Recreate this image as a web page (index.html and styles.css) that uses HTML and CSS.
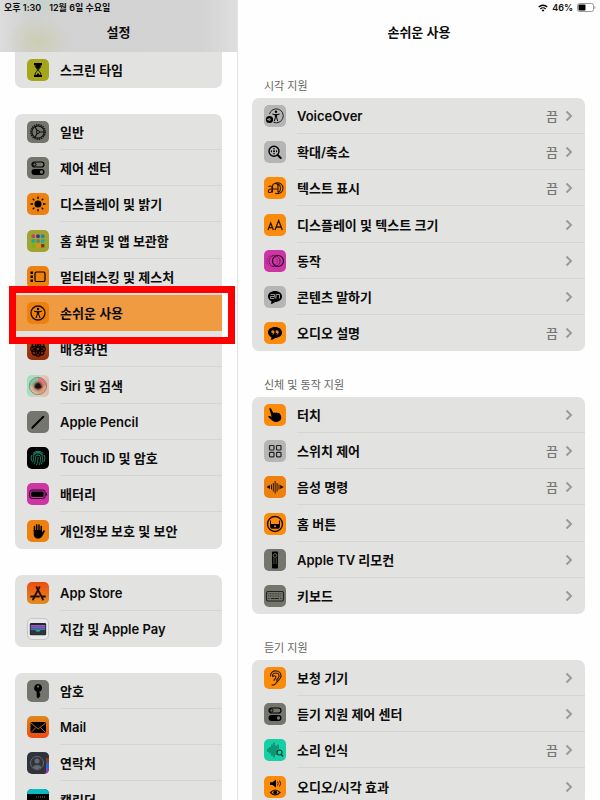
FILE: index.html
```html
<!DOCTYPE html>
<html lang="ko">
<head>
<meta charset="utf-8">
<meta name="viewport" content="width=device-width, initial-scale=1">
<title>설정</title>
<link rel="stylesheet" href="styles.css">
</head>
<body>
<div class="app">
  <nav class="sidebar" aria-label="설정">
    <header class="bar bar-side">
      <div class="status"><span>오후 1:30</span><span>12월 6일 수요일</span></div>
      <h1 class="title">설정</h1>
    </header>
    <div class="groups">
      <ul class="card card-cut">
        <li><a class="row" href="#"><svg class="icon olive" viewBox="0 0 22 22"><path d="M7 4h8v2H7zM7 16h8v2H7z"/><path d="M8 5c0 4 2 4 2.500 6C10 13 8 13 8 17h6c0-4-2-4-2.500-6C12 9 14 9 14 5z" fill="none" stroke="#000"/><path d="M8.500 6h5c0 2-1 3-2.500 4.500C9.500 9 8.500 8 8.500 6zM8.500 17l2.500-3 2.500 3z"/></svg><span class="label">스크린 타임</span></a></li>
      </ul>
      <ul class="card">
        <li><a class="row" href="#"><svg class="icon stone" viewBox="0 0 22 22"><circle cx="11" cy="11" r="7.300" fill="none" stroke="#111" stroke-width="1.400" stroke-dasharray="1.300 1"/><circle cx="11" cy="11" r="6.200" fill="none" stroke="#111" stroke-width="1.300"/><circle cx="11" cy="11" r="1.500" fill="none" stroke="#111"/><path d="M12.500 11H17M10.200 9.700 8 5.700M10.200 12.300 8 16.300" stroke="#111" stroke-width="1.200"/></svg><span class="label">일반</span></a></li>
        <li><a class="row" href="#"><svg class="icon stone" viewBox="0 0 22 22"><rect x="5" y="5" width="12" height="5" rx="2.500" fill="none" stroke="#000" stroke-width="1.200"/><circle cx="7.500" cy="7.500" r="1.500" fill="none" stroke="#000"/><rect x="4.500" y="12" width="13" height="6" rx="3"/><circle cx="14.500" cy="15" r="1.700" fill="#777870"/></svg><span class="label">제어 센터</span></a></li>
        <li><a class="row" href="#"><svg class="icon orange" viewBox="0 0 22 22"><circle cx="11" cy="11" r="3.500"/><path d="M11 3.500v2.500M11 16v2.500M3.500 11H6M16 11h2.500M5.700 5.700l1.700 1.700M14.600 14.600l1.700 1.700M5.700 16.300l1.700-1.700M14.600 7.400l1.700-1.700" stroke="#000" stroke-width="1.300"/></svg><span class="label">디스플레이 및 밝기</span></a></li>
        <li><a class="row" href="#"><svg class="icon moss" viewBox="0 0 22 22"><g><rect x="4.500" y="4.500" width="3.500" height="3.500" rx="1" fill="#c63e78"/><rect x="9.300" y="4.500" width="3.500" height="3.500" rx="1" fill="#2d399c"/><rect x="14" y="4.500" width="3.500" height="3.500" rx="1" fill="#2a79b8"/><rect x="4.500" y="9.300" width="3.500" height="3.500" rx="1" fill="#0eb194"/><rect x="9.300" y="9.300" width="3.500" height="3.500" rx="1" fill="#777870"/><rect x="14" y="9.300" width="3.500" height="3.500" rx="1" fill="#08b3a2"/><rect x="4.500" y="14" width="3.500" height="3.500" rx="1" fill="#6eb615"/><rect x="9.300" y="14" width="3.500" height="3.500" rx="1" fill="#e88b13"/><rect x="14" y="14" width="3.500" height="3.500" rx="1" fill="#8c3218"/></g></svg><span class="label">홈 화면 및 앱 보관함</span></a></li>
        <li><a class="row" href="#"><svg class="icon orange" viewBox="0 0 22 22"><rect x="8" y="6" width="10" height="9.500" rx="1.500" fill="none" stroke="#000" stroke-width="1.200"/><path d="M3.500 5.500H6V8H3.500zM3.500 9.500H6V12H3.500zM3.500 13.500H6V16H3.500z"/></svg><span class="label">멀티태스킹 및 제스처</span></a></li>
        <li class="marked"><a class="row current" href="#" aria-current="page"><svg class="icon orange" viewBox="0 0 22 22"><circle cx="11" cy="11" r="7" fill="none" stroke="#1b0d00" stroke-width="1.300"/><circle cx="11" cy="7" r="1.200"/><path d="M7.500 9.300l2.500.5h2l2.500-.5M10.300 10v2.500L9 15.700M11.700 10v2.500l1.300 3.200M11 10v2.500" fill="none" stroke="#000" stroke-linecap="round"/></svg><span class="label">손쉬운 사용</span></a></li>
        <li><a class="row" href="#"><svg class="icon rust" viewBox="0 0 22 22"><g fill="none" stroke="#160300" stroke-width="1.300"><circle cx="11" cy="6.500" r="2.700"/><circle cx="11" cy="15.500" r="2.700"/><circle cx="6.500" cy="11" r="2.700"/><circle cx="15.500" cy="11" r="2.700"/><circle cx="7.800" cy="7.800" r="2.700"/><circle cx="14.200" cy="14.200" r="2.700"/><circle cx="7.800" cy="14.200" r="2.700"/><circle cx="14.200" cy="7.800" r="2.700"/><circle cx="11" cy="11" r="2"/></g></svg><span class="label">배경화면</span></a></li>
        <li><a class="row" href="#"><svg class="icon siri" viewBox="0 0 22 22"><defs><radialGradient id="orb"><stop offset="0"/><stop offset=".25" stop-color="#2a1716"/><stop offset=".6" stop-color="#c3826d" stop-opacity=".5"/><stop offset="1" stop-color="#d9b5a0" stop-opacity=".1"/></radialGradient></defs><path d="M11 11V2.500a8.500 8.500 0 0 1 8.500 8.500z" fill="#ea5560" opacity=".8"/><path d="M11 11h8.500a8.500 8.500 0 0 1-8.500 8.500z" fill="#e89a6a" opacity=".8"/><path d="M11 11v8.500A8.500 8.500 0 0 1 2.500 11z" fill="#e8b890" opacity=".8"/><path d="M11 11H2.500A8.500 8.500 0 0 1 11 2.500z" fill="#55cfa4" opacity=".8"/><circle cx="11" cy="11" r="8.700" fill="url(#orb)" stroke="#66756a" stroke-width=".7"/><path d="M7 12c2-.5 3-3 5-4 0 2 1 3 4 4-3 1-6 1.500-9 0z" fill="#161412"/></svg><span class="label">Siri 및 검색</span></a></li>
        <li><a class="row" href="#"><svg class="icon stone" viewBox="0 0 22 22"><path d="M5.500 16.500 14 8M15 7l1.300-1.300" stroke="#000" stroke-width="2" stroke-linecap="round"/><path d="M4.500 17.700l.7-2.500 1.700 1.700z"/></svg><span class="label">Apple Pencil</span></a></li>
        <li><a class="row" href="#"><svg class="icon black" viewBox="0 0 22 22"><g fill="none" stroke="#218f73" stroke-width=".9" stroke-linecap="round"><path d="M6 6.200a7 7 0 0 1 10 0M4.500 8.500a7 7 0 0 0 0 5M17.500 8.500a7 7 0 0 1-.5 6M5.500 15c1-1.500 1-3 1-4.500a4.500 4.500 0 0 1 9 0c0 2.500 0 4-1 6.500M7 17c1.300-2 1.500-4 1.500-6.500a2.500 2.500 0 0 1 5 0c0 3-.2 5-1.300 7.300M9.500 18c1-2 1.500-4.500 1.500-7.500M6 8.300c2-4 8-4 10 0"/></g></svg><span class="label">Touch ID 및 암호</span></a></li>
        <li><a class="row" href="#"><svg class="icon magenta" viewBox="0 0 22 22"><rect x="2.700" y="7" width="15.500" height="8.500" rx="2.500" fill="none" stroke="#24051d"/><rect x="4.200" y="8.500" width="12.500" height="5.500" rx="1.300"/><path d="M19 9.500c1.500.5 1.500 3 0 3.500z"/></svg><span class="label">배터리</span></a></li>
        <li><a class="row" href="#"><svg class="icon orange" viewBox="0 0 22 22"><path d="M7.500 11V6.500M9.700 10V4.700M12 10V5M14.200 11V6.500M15 14l2-3" stroke="#000" stroke-width="1.500" stroke-linecap="round"/><path d="M6.700 10H15v3l1.500-2c1-.7 1.500.2 1 1L15 16.500c-1 1.500-2 2-4 2-3.500 0-4.300-2.500-4.300-5z"/></svg><span class="label">개인정보 보호 및 보안</span></a></li>
      </ul>
      <ul class="card">
        <li><a class="row" href="#"><svg class="icon sunset" viewBox="0 0 22 22"><path d="M9.500 5l6.500 12.500M12.500 5 6 17.500M4 14.500h8M14.500 14.500H18" stroke="#210b00" stroke-width="1.800" stroke-linecap="round"/></svg><span class="label">App Store</span></a></li>
        <li><a class="row" href="#"><svg class="icon wallet" viewBox="0 0 22 22"><rect x="2" y="4.500" width="18" height="13.500" rx="1.500" fill="#222830"/><path d="M3 6.500h16v2H3z" fill="#8d61a9"/><path d="M3 8.500h16v2H3z" fill="#8a55d2"/><path d="M3 10.500h16v2H3z" fill="#397baa"/><path d="M3 12h4.500c1 0 1 2.500 3.500 2.500s2.500-2.500 3.500-2.500H19v5H3z" fill="#30343b"/><path d="M8 12h6c-.6 1-1 2-3 2s-2.400-1-3-2z" fill="#16a9a2"/></svg><span class="label">지갑 및 Apple Pay</span></a></li>
      </ul>
      <ul class="card">
        <li><a class="row" href="#"><svg class="icon stone" viewBox="0 0 22 22"><path fill-rule="evenodd" d="M11 4a4 4 0 0 1 1.500 7.700V13l1 1-1 1 1 1-1 1L11 18.500 9.700 17v-5.300A4 4 0 0 1 11 4zm0 1.500a1.100 1.100 0 1 0 0 2.200 1.100 1.100 0 0 0 0-2.200z"/></svg><span class="label">암호</span></a></li>
        <li><a class="row" href="#"><svg class="icon sunrise" viewBox="0 0 22 22"><rect x="3.500" y="6" width="15.500" height="11" rx="1.500"/><path d="M4 7l7.200 6L18.500 7M4 16.500l5-5M18.500 16.500l-5-5" fill="none" stroke="#d86a15" stroke-width=".9"/></svg><span class="label">Mail</span></a></li>
        <li><a class="row" href="#"><svg class="icon contacts" viewBox="0 0 22 22"><path d="M19 0h3v6h-3z" fill="#30333b"/><path d="M19 6h3v5h-3z" fill="#81421f"/><path d="M19 11h3v6h-3z" fill="#2865d4"/><path d="M19 17h3v5h-3z" fill="#a832ae"/><circle cx="10" cy="11" r="6.500" fill="none" stroke="#646973"/><circle cx="10" cy="9" r="2.500" fill="#646973"/><path d="M5.700 15.200c1-3 7.600-3 8.600 0-2.500 2.400-6 2.400-8.600 0z" fill="#646973"/></svg><span class="label">연락처</span></a></li>
        <li><a class="row" href="#"><svg class="icon black" viewBox="0 0 22 22"><path d="M0 0h22v5H0z" fill="#09bac1"/><path d="M9 8h10M4 12h15" stroke="#777" stroke-dasharray="1 1"/></svg><span class="label">캘린더</span></a></li>
      </ul>
    </div>
  </nav>

  <main class="detail">
    <header class="bar">
      <div class="status status-end">
        <svg class="wifi" viewBox="0 0 10 8"><path d="M.7 3a6.200 6.200 0 0 1 8.600 0M2.400 4.900a3.700 3.700 0 0 1 5.200 0" fill="none" stroke="#000" stroke-width="1.400"/><path d="M3.600 6.200a2 2 0 0 1 2.800 0L5 7.700z"/></svg>
        <span>46%</span>
        <svg class="battery" viewBox="0 0 19 9"><rect x=".5" y=".5" width="16" height="8" rx="2" fill="none" stroke="#999"/><rect x="1.500" y="1.500" width="7" height="6" rx="1"/><path d="M17.500 3c1.300.4 1.300 2.600 0 3z" fill="#999"/></svg>
      </div>
      <h2 class="title">손쉬운 사용</h2>
    </header>

    <section class="section">
      <h3 class="caption">시각 지원</h3>
      <ul class="card">
        <li><a class="row" href="#"><svg class="icon silver" viewBox="0 0 22 22"><path d="M5.500 9a7 7 0 1 1 4 8.300" fill="none" stroke="#222"/><circle cx="12" cy="6.800" r="1.200"/><path d="M8.800 9.200l2.200.5h2l2.200-.5M11.400 10v2.500l-1 3.300M12.600 10v2.500l1 3.300M12 10v2.500" fill="none" stroke="#000" stroke-linecap="round"/><circle cx="5.500" cy="14.500" r="3.600"/><path d="M3.500 14h1l1-1v3l-1-1h-1zM6.500 13.500v2" stroke="#999" stroke-width=".6" fill="#999"/></svg><span class="label">VoiceOver</span><span class="value">끔</span><svg class="chevron" viewBox="0 0 8 12"><path d="M1.500 1.500 6 6l-4.500 4.500"/></svg></a></li>
        <li><a class="row" href="#"><svg class="icon silver" viewBox="0 0 22 22"><circle cx="10" cy="10.300" r="5" fill="none" stroke="#000" stroke-width="1.400"/><path d="M13.700 14l3 3" stroke="#000" stroke-width="2" stroke-linecap="round"/><path d="M10 6.800l1.200 1.500H8.800zM10 13.800l1.200-1.500H8.800zM6.500 10.300l1.500-1.200v2.400zM13.500 10.300 12 9.100v2.400z"/><circle cx="10" cy="10.300" r="1"/></svg><span class="label">확대/축소</span><span class="value">끔</span><svg class="chevron" viewBox="0 0 8 12"><path d="M1.500 1.500 6 6l-4.500 4.500"/></svg></a></li>
        <li><a class="row" href="#"><svg class="icon amber" viewBox="0 0 22 22"><g fill="none" stroke="#2b1300" stroke-width="1.100"><path d="M11 6.200c5-1.500 8 1.500 8 5s-3 6.500-8 5"/><path d="M4.500 10c1-1.500 3.500-1.500 3.500.5v5M8 12c-4.500-.5-4.500 4-2 3.500 1.500 0 2-1.500 2-2.500M8 12h6M8.500 15.500V9.500c0-4 5.500-4 5.500 0v6M11.500 6.500c4 0 5 3 5 5s-1 3.500-2.500 4"/></g></svg><span class="label">텍스트 표시</span><span class="value">끔</span><svg class="chevron" viewBox="0 0 8 12"><path d="M1.500 1.500 6 6l-4.500 4.500"/></svg></a></li>
        <li><a class="row" href="#"><svg class="icon amber" viewBox="0 0 22 22"><path d="M4 16l2.700-7 2.700 7M5 13.700h3.500M11 16l3.700-9.500L18.300 16M12.300 13h4.700" fill="none" stroke="#291300" stroke-width="1.300"/></svg><span class="label">디스플레이 및 텍스트 크기</span><svg class="chevron" viewBox="0 0 8 12"><path d="M1.500 1.500 6 6l-4.500 4.500"/></svg></a></li>
        <li><a class="row" href="#"><svg class="icon magenta" viewBox="0 0 22 22"><g fill="none" stroke="#270620"><circle cx="14" cy="11" r="5.500" stroke-width="1.200"/><circle cx="10.500" cy="11" r="5.500" stroke-dasharray="1.500 .8" stroke-width=".8"/><circle cx="8" cy="11" r="5.300" stroke-dasharray=".7 1.200" stroke-width=".7"/></g></svg><span class="label">동작</span><svg class="chevron" viewBox="0 0 8 12"><path d="M1.500 1.500 6 6l-4.500 4.500"/></svg></a></li>
        <li><a class="row" href="#"><svg class="icon silver" viewBox="0 0 22 22"><path d="M11 5c4 0 7 2.300 7 5.500S15 16 11 16c-1.200 1.300-2.700 2-4.500 1.800.8-.7 1-1.500.9-2.500C5.500 14.300 4 12.700 4 10.500 4 7.300 7 5 11 5z"/><path d="M6.500 8.500h4v2h-4v2h3.500M12 12.500v-4h3.500v4M11 10.500v2" fill="none" stroke="#a5a5a5" stroke-width=".9"/></svg><span class="label">콘텐츠 말하기</span><svg class="chevron" viewBox="0 0 8 12"><path d="M1.500 1.500 6 6l-4.500 4.500"/></svg></a></li>
        <li><a class="row" href="#"><svg class="icon amber" viewBox="0 0 22 22"><path d="M11 5c4 0 7 2.300 7 5.500S15 16 11 16c-1.200 1.300-2.700 2-4.500 1.800.8-.7 1-1.500.9-2.500C5.500 14.300 4 12.700 4 10.500 4 7.300 7 5 11 5z"/><g fill="#e78612"><circle cx="8.800" cy="9.800" r="1.500"/><circle cx="13" cy="9.800" r="1.500"/><path d="M10.300 9.500c.3 2-.5 3-2 3.300.7-1 1-1.500 1-2.500zM14.500 9.500c.3 2-.5 3-2 3.300.7-1 1-1.500 1-2.500z"/></g></svg><span class="label">오디오 설명</span><span class="value">끔</span><svg class="chevron" viewBox="0 0 8 12"><path d="M1.500 1.500 6 6l-4.500 4.500"/></svg></a></li>
      </ul>
    </section>

    <section class="section">
      <h3 class="caption">신체 및 동작 지원</h3>
      <ul class="card">
        <li><a class="row" href="#"><svg class="icon amber" viewBox="0 0 22 22"><path d="M5.200 4.500c.8-.7 1.700-.3 2.100.5L9.300 9c.7-.7 1.700-.6 2.200 0 .8-.7 1.800-.5 2.200.2.900-.6 1.900-.2 2.200.6 1 1.500 1.600 3 1.400 4.500-.5 2.500-3 3.700-5.300 3.700-2 0-3.500-1-5-2.500l-2.500-2.200c-.7-.8.200-1.700 1.200-1.300l2 .8z"/></svg><span class="label">터치</span><svg class="chevron" viewBox="0 0 8 12"><path d="M1.500 1.500 6 6l-4.500 4.500"/></svg></a></li>
        <li><a class="row" href="#"><svg class="icon silver" viewBox="0 0 22 22"><g fill="none" stroke="#222" stroke-width="1.200"><rect x="5.500" y="5.500" width="4.500" height="4.500" rx=".8"/><rect x="12.500" y="5.500" width="4.500" height="4.500" rx=".8"/><rect x="5.500" y="12.300" width="4.500" height="4.500" rx=".8"/><rect x="12.500" y="12.300" width="4.500" height="4.500" rx=".8"/></g></svg><span class="label">스위치 제어</span><span class="value">끔</span><svg class="chevron" viewBox="0 0 8 12"><path d="M1.500 1.500 6 6l-4.500 4.500"/></svg></a></li>
        <li><a class="row" href="#"><svg class="icon orange" viewBox="0 0 22 22"><path d="M7.500 8.500v5M11.200 5v12.500M15 8.500v5M9.300 7v8.500M13.100 7v8.500" stroke="#291300" stroke-width="1"/><path d="M2.500 11 6 9v4zM19.700 11 16.200 9v4z"/></svg><span class="label">음성 명령</span><span class="value">끔</span><svg class="chevron" viewBox="0 0 8 12"><path d="M1.500 1.500 6 6l-4.500 4.500"/></svg></a></li>
        <li><a class="row" href="#"><svg class="icon amber" viewBox="0 0 22 22"><circle cx="11" cy="11" r="7.500" fill="none" stroke="#1d0d00" stroke-width="1.400"/><path d="M6.500 7.500v6q0 1.500 1.500 1.500h6q1.500 0 1.500-1.500v-6" fill="none" stroke="#1d0d00"/><path d="M6.500 11h9v3q0 1.500-1.500 1.500H8q-1.500 0-1.500-1.500z"/><circle cx="11" cy="13.200" r="1" fill="#ef8b12"/></svg><span class="label">홈 버튼</span><svg class="chevron" viewBox="0 0 8 12"><path d="M1.500 1.500 6 6l-4.500 4.500"/></svg></a></li>
        <li><a class="row" href="#"><svg class="icon stone" viewBox="0 0 22 22"><rect x="8" y="2.500" width="6" height="17" rx="1"/><g fill="none" stroke="#85867e" stroke-width=".8"><circle cx="11" cy="6.500" r="1.800"/></g><path d="M9.300 10h1.200M11.700 10h1.200M9.300 12h1.200M11.700 12h1.200M9.300 14h1.200M11.700 14h1.200" stroke="#85867e"/></svg><span class="label">Apple TV 리모컨</span><svg class="chevron" viewBox="0 0 8 12"><path d="M1.500 1.500 6 6l-4.500 4.500"/></svg></a></li>
        <li><a class="row" href="#"><svg class="icon stone" viewBox="0 0 22 22"><rect x="2.500" y="6.500" width="17" height="9.500" rx="1.500" fill="none" stroke="#22231f" stroke-width="1.200"/><path d="M4.500 8.800h13M4.500 11h13" stroke="#22231f" stroke-dasharray=".8 .8"/><path d="M4.500 13.500h1.200M7 13.500h8M16.300 13.500h1.200" stroke="#22231f"/></svg><span class="label">키보드</span><svg class="chevron" viewBox="0 0 8 12"><path d="M1.500 1.500 6 6l-4.500 4.500"/></svg></a></li>
      </ul>
    </section>

    <section class="section">
      <h3 class="caption">듣기 지원</h3>
      <ul class="card">
        <li><a class="row" href="#"><svg class="icon amber" viewBox="0 0 22 22"><g fill="none" stroke="#361900" stroke-width="1.200" stroke-linecap="round"><path d="M6.500 9c0-7 10.500-6.500 10.500 0 0 3.500-3 4-4.500 6.500-1 1.700-2.500 3-4.500 2.500"/><path d="M8.500 9c0-4 6.500-4 6.500 0 0 2-1.500 3-2.500 4.200"/><path d="M8.700 9.500c1.500-1.500 3.800-.5 3 1.500-.5 1.500-2 1-1.700 2.500"/></g></svg><span class="label">보청 기기</span><svg class="chevron" viewBox="0 0 8 12"><path d="M1.500 1.500 6 6l-4.500 4.500"/></svg></a></li>
        <li><a class="row" href="#"><svg class="icon stone" viewBox="0 0 22 22"><rect x="5" y="5" width="12" height="5" rx="2.500" fill="none" stroke="#000" stroke-width="1.200"/><circle cx="7.500" cy="7.500" r="1.500" fill="none" stroke="#000"/><rect x="4.500" y="12" width="13" height="6" rx="3"/><circle cx="14.500" cy="15" r="1.700" fill="#777870"/></svg><span class="label">듣기 지원 제어 센터</span><svg class="chevron" viewBox="0 0 8 12"><path d="M1.500 1.500 6 6l-4.500 4.500"/></svg></a></li>
        <li><a class="row" href="#"><svg class="icon mint" viewBox="0 0 22 22"><path d="M4 10v2.500M6 8.500V14M8 6v10.500M10 4v14M12 7v8.500M14 6v4" stroke="#07513e" stroke-width=".9" stroke-linecap="round"/><circle cx="15.500" cy="13.500" r="2.500" fill="none" stroke="#07382c" stroke-width="1.100"/><path d="M17.300 15.500l1.700 2" stroke="#07382c" stroke-width="1.300"/></svg><span class="label">소리 인식</span><span class="value">끔</span><svg class="chevron" viewBox="0 0 8 12"><path d="M1.500 1.500 6 6l-4.500 4.500"/></svg></a></li>
        <li><a class="row" href="#"><svg class="icon amber" viewBox="0 0 22 22"><path d="M6 6.200h2.500L12 3.500v8L8.500 9H6z"/><path d="M13.500 5.500q1.500 2 0 4M15.500 4.500q2.200 3 0 6" fill="none" stroke="#201000" stroke-width=".9"/><path d="M6.500 16.500q4.500-5 9.500 0-5 5-9.500 0z" fill="none" stroke="#201000" stroke-width="1.200"/><circle cx="11.200" cy="16.500" r="1.900"/></svg><span class="label">오디오/시각 효과</span><svg class="chevron" viewBox="0 0 8 12"><path d="M1.500 1.500 6 6l-4.500 4.500"/></svg></a></li>
      </ul>
    </section>
  </main>
</div>
</body>
</html>
```
FILE: styles.css
```css
* {
  box-sizing: border-box;
}

body {
  margin: 0;
  background: #fefefe;
  color: #0c0c0c;
  font: 600 13px/18px Inter, "Noto Sans CJK KR", sans-serif;
}

ul {
  margin: 0;
  padding: 0;
  list-style: none;
}

.app {
  display: grid;
  grid-template-columns: minmax(200px, 238px) 1fr;
  height: 100vh;
  overflow: hidden;
}

.sidebar {
  border-right: 1px solid #e2e2e2;
  min-width: 0;
}

.detail {
  min-width: 0;
}

/* Title bars */
.bar {
  height: 52px;
  padding: 1px 4px 0;
}

.bar-side {
  background:
    radial-gradient(ellipse 32px 26px at 38px 42px, #cccdb4, transparent),
    radial-gradient(ellipse 32px 20px at 38px 0, #c5d3cb, transparent),
    linear-gradient(90deg, #dcdcdc, #d2d2d2 12%, #d3d3d3 85%, #dedede);
}

.status {
  display: flex;
  align-items: center;
  gap: 8px;
  height: 13px;
  font-size: 9px;
  line-height: 13px;
}

.status-end {
  justify-content: flex-end;
  gap: 4px;
}

.wifi {
  width: 10px;
  height: 8px;
}

.battery {
  width: 19px;
  height: 9px;
}

.title {
  margin: 9px 0 0;
  font-size: 13px;
  font-weight: 600;
  line-height: 18px;
  text-align: center;
}

/* Grouped lists */
.groups {
  display: grid;
  gap: 26px;
  padding: 0 15px;
}

.card {
  border-radius: 7px;
  background: #e2e2e0;
}

.card-cut {
  border-radius: 0 0 7px 7px;
}

.row {
  display: flex;
  align-items: center;
  position: relative;
  height: 36px;
  padding: 0 12px;
  color: inherit;
  text-decoration: none;
}

li:nth-child(4n) .row {
  height: 37px;
}

li:not(:last-child) .row::after {
  content: "";
  position: absolute;
  right: 0;
  bottom: 0;
  left: 45px;
  height: 1px;
  background: #d5d5d3;
}

.label {
  flex: 1;
  margin-left: 11px;
  white-space: nowrap;
}

.value {
  margin-right: 7px;
  color: #777772;
  font-weight: 500;
}

.chevron {
  width: 8px;
  height: 12px;
  fill: none;
  stroke: #9b9b99;
  stroke-width: 2;
}

.current {
  background: #f09b42;
}

li.marked .current::after {
  content: none;
}

.marked {
  position: relative;
}

.marked::after {
  content: "";
  position: absolute;
  z-index: 1;
  inset: -9px -13px -13px -6px;
  border: 7px solid #fe0000;
  pointer-events: none;
}

/* Detail sections */
.section {
  padding: 0 15px 0 14px;
}

.section + .section {
  margin-top: 25px;
}

.bar + .section {
  margin-top: 25px;
}

.caption {
  margin: 0;
  padding: 0 12px 5px;
  color: #656562;
  font: 400 11px/16px "Noto Sans CJK KR", sans-serif;
}

/* Icon tiles */
.icon {
  flex: none;
  width: 22px;
  height: 22px;
  border-radius: 5px;
}

.olive { background: #a5a51c; }
.moss { background: #a0a32d; }
.stone { background: #74756d; }
.silver { background: #b5b5b5; }
.orange { background: #ee800d; }
.amber { background: #fb8b0b; }
.magenta { background: #cd35a5; }
.mint { background: #14d0a4; }
.black { background: #000; }
.rust { background: linear-gradient(#b54a10, #8f2e0c); }
.sunset { background: linear-gradient(#f04c10, #de8d20); }
.sunrise { background: linear-gradient(#dc8b1d, #ee4a12); }
.contacts { background: #30333b; }

.siri {
  background: linear-gradient(100deg, #8fe3be, #d8d0c4 55%, #e9b69e);
}

.wallet {
  border: 1px solid #c5c5c5;
  background: #e9e9e9;
}
```
